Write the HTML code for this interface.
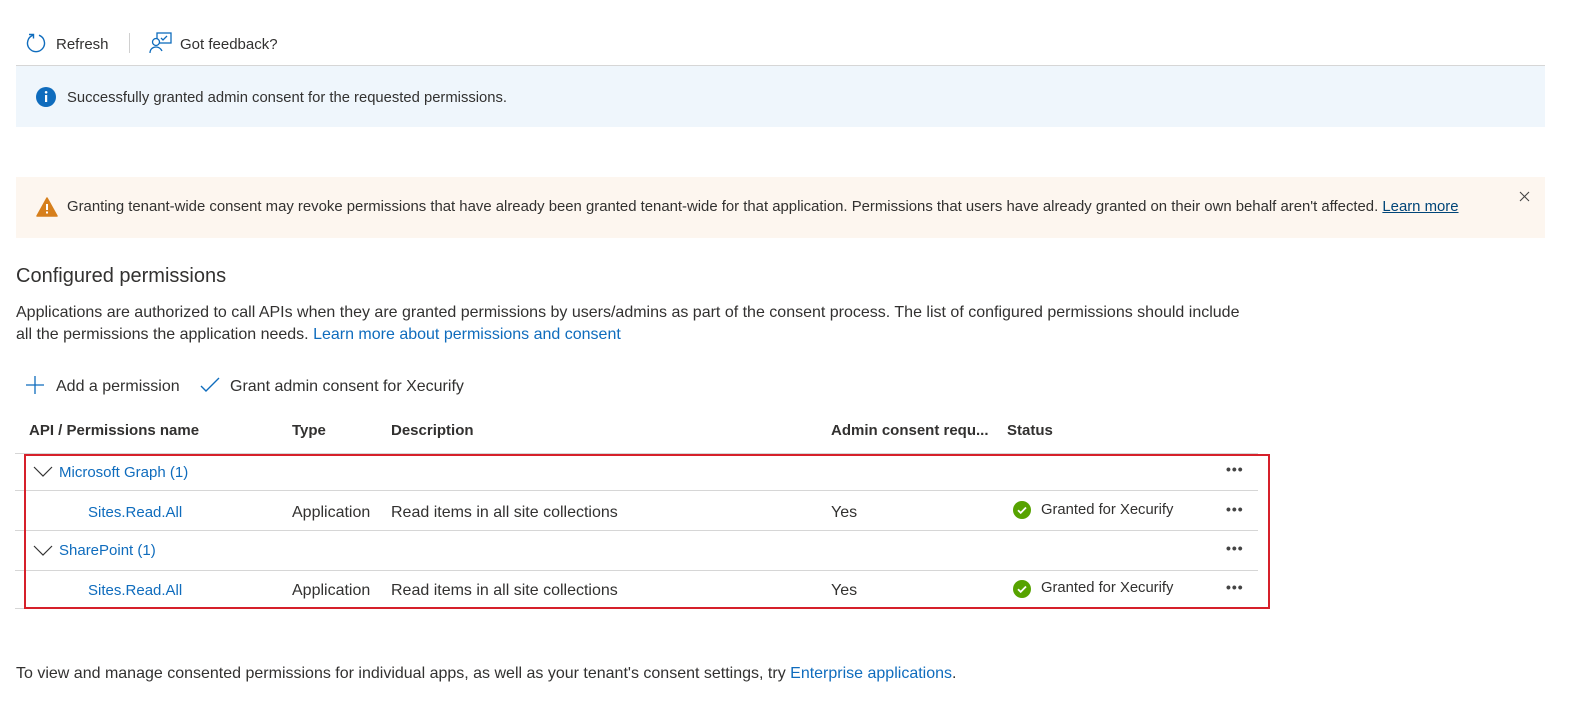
<!DOCTYPE html>
<html><head><meta charset="utf-8"><style>
body{margin:0;width:1578px;height:708px;background:#fff;font-family:"Liberation Sans",sans-serif;font-size:14px;color:#323130;position:relative;overflow:hidden}
.a{position:absolute;white-space:nowrap}
.l{color:#0f6cbd}
.ln{position:absolute;left:15px;width:1243px;height:1px;background:#d6d6d6}
.dots{position:absolute;left:1226px;font-size:14px;letter-spacing:1px;color:#444;font-weight:bold}
.h{font-weight:bold;font-size:15px;top:422px}
.r{font-size:16px}
</style></head><body>
<svg class="a" style="left:25px;top:32px" width="22" height="22" viewBox="0 0 22 22"><path d="M8 3.2A8.5 8.5 0 1 0 14 3.2" fill="none" stroke="#0f6cbd" stroke-width="1.4"/><path d="M4 2.5h4.5v4" fill="none" stroke="#0f6cbd" stroke-width="1.4"/></svg>
<div class="a" style="left:56px;top:36px;font-size:15px">Refresh</div>
<div class="a" style="left:129px;top:33px;width:1px;height:20px;background:#d0d0d0"></div>
<svg class="a" style="left:149px;top:32px" width="24" height="22" viewBox="0 0 24 22"><rect x="8" y="1" width="14" height="10" fill="none" stroke="#0f6cbd" stroke-width="1.3"/><path d="M12 6l2 2 4-4" fill="none" stroke="#0f6cbd" stroke-width="1.3"/><circle cx="7" cy="10" r="3.5" fill="#fff" stroke="#0f6cbd" stroke-width="1.3"/><path d="M1 21c0-4 3-6 6-6s5 2 6 4" fill="none" stroke="#0f6cbd" stroke-width="1.3"/></svg>
<div class="a" style="left:180px;top:36px;font-size:15px">Got feedback?</div>
<div class="a" style="left:16px;top:65px;width:1529px;height:1px;background:#d6d6d6"></div>
<div class="a" style="left:16px;top:66px;width:1529px;height:61px;background:#eff6fc"></div>
<svg class="a" style="left:36px;top:87px" width="20" height="20" viewBox="0 0 20 20"><circle cx="10" cy="10" r="10" fill="#0f6cbd"/><rect x="9" y="8" width="2.2" height="7" fill="#fff"/><circle cx="10.1" cy="5.3" r="1.3" fill="#fff"/></svg>
<div class="a" style="left:67px;top:90px;font-size:14.8px">Successfully granted admin consent for the requested permissions.</div>
<div class="a" style="left:16px;top:177px;width:1529px;height:61px;background:#fdf6ef"></div>
<svg class="a" style="left:36px;top:197px" width="22" height="20" viewBox="0 0 22 20"><path d="M11 1L21 19H1Z" fill="#d67f1c" stroke="#d67f1c" stroke-linejoin="round" stroke-width="1.5"/><rect x="10" y="7" width="2" height="6" fill="#fff"/><rect x="10" y="14.5" width="2" height="2" fill="#fff"/></svg>
<div class="a" style="left:67px;top:199px;font-size:14.9px">Granting tenant-wide consent may revoke permissions that have already been granted tenant-wide for that application. Permissions that users have already granted on their own behalf aren't affected. <span style="color:#004578;text-decoration:underline">Learn more</span></div>
<svg class="a" style="left:1519px;top:191px" width="11" height="11" viewBox="0 0 11 11"><path d="M1 1l9 9M10 1l-9 9" stroke="#444" stroke-width="1.1"/></svg>
<div class="a" style="left:16px;top:265px;font-size:20px">Configured permissions</div>
<div class="a" style="left:16px;top:304px;font-size:16px">Applications are authorized to call APIs when they are granted permissions by users/admins as part of the consent process. The list of configured permissions should include</div>
<div class="a" style="left:16px;top:326px;font-size:16px">all the permissions the application needs. <span class="l">Learn more about permissions and consent</span></div>
<svg class="a" style="left:26px;top:376px" width="18" height="18" viewBox="0 0 18 18"><path d="M9 0v18M0 9h18" stroke="#0f6cbd" stroke-width="1.3"/></svg>
<div class="a" style="left:56px;top:378px;font-size:16px">Add a permission</div>
<svg class="a" style="left:200px;top:377px" width="20" height="16" viewBox="0 0 20 16"><path d="M1 9l5 5L19 1" fill="none" stroke="#0f6cbd" stroke-width="1.4"/></svg>
<div class="a" style="left:230px;top:378px;font-size:16px">Grant admin consent for Xecurify</div>
<div class="a h" style="left:29px">API / Permissions name</div>
<div class="a h" style="left:292px">Type</div>
<div class="a h" style="left:391px">Description</div>
<div class="a h" style="left:831px">Admin consent requ...</div>
<div class="a h" style="left:1007px">Status</div>
<div class="ln" style="top:453px"></div><div class="ln" style="top:490px"></div><div class="ln" style="top:530px"></div><div class="ln" style="top:570px"></div><div class="ln" style="top:608px"></div>
<svg class="a" style="left:33px;top:466px" width="20" height="12" viewBox="0 0 20 12"><path d="M1 1l9 9 9-9" fill="none" stroke="#333" stroke-width="1.2"/></svg>
<div class="a l" style="left:59px;top:464px;font-size:15px">Microsoft Graph (1)</div>
<div class="dots" style="top:461px">•••</div>
<div class="a l" style="left:88px;top:504px;font-size:15px">Sites.Read.All</div>
<div class="a r" style="left:292px;top:504px">Application</div>
<div class="a r" style="left:391px;top:504px">Read items in all site collections</div>
<div class="a r" style="left:831px;top:504px">Yes</div>
<svg class="a" style="left:1013px;top:501px" width="18" height="18" viewBox="0 0 18 18"><circle cx="9" cy="9" r="9" fill="#57a300"/><path d="M5 9.2l2.7 2.7L13 6.5" fill="none" stroke="#fff" stroke-width="1.8"/></svg>
<div class="a" style="left:1041px;top:502px;font-size:14.8px">Granted for Xecurify</div>
<div class="dots" style="top:501px">•••</div>
<svg class="a" style="left:33px;top:545px" width="20" height="12" viewBox="0 0 20 12"><path d="M1 1l9 9 9-9" fill="none" stroke="#333" stroke-width="1.2"/></svg>
<div class="a l" style="left:59px;top:542px;font-size:15px">SharePoint (1)</div>
<div class="dots" style="top:540px">•••</div>
<div class="a l" style="left:88px;top:582px;font-size:15px">Sites.Read.All</div>
<div class="a r" style="left:292px;top:582px">Application</div>
<div class="a r" style="left:391px;top:582px">Read items in all site collections</div>
<div class="a r" style="left:831px;top:582px">Yes</div>
<svg class="a" style="left:1013px;top:580px" width="18" height="18" viewBox="0 0 18 18"><circle cx="9" cy="9" r="9" fill="#57a300"/><path d="M5 9.2l2.7 2.7L13 6.5" fill="none" stroke="#fff" stroke-width="1.8"/></svg>
<div class="a" style="left:1041px;top:580px;font-size:14.8px">Granted for Xecurify</div>
<div class="dots" style="top:579px">•••</div>
<div class="a" style="left:24px;top:454px;width:1242px;height:151px;border:2px solid #d6202a"></div>
<div class="a" style="left:16px;top:665px;font-size:16px">To view and manage consented permissions for individual apps, as well as your tenant's consent settings, try <span class="l">Enterprise applications</span>.</div>
</body></html>
